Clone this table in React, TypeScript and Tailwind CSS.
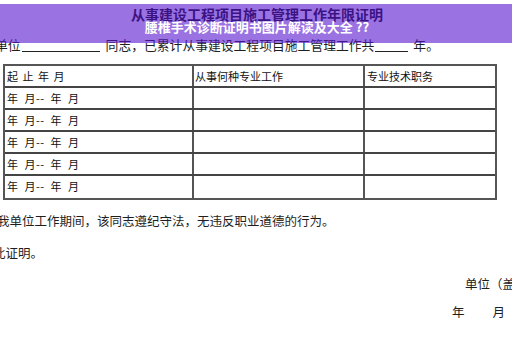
import React from "react";

const rows = ["年 月-- 年 月", "年 月-- 年 月", "年 月-- 年 月", "年 月-- 年 月", "年 月-- 年 月"];

export default function App() {
  const font = { fontFamily: '"Noto Sans CJK SC", "Noto Sans", sans-serif' };
  return (
    <div className="relative w-[512px] h-[340px] overflow-hidden bg-white text-[#1e1e1e]" style={font}>
      <div className="flex flex-col">
        <div className="h-[6px]" />
        <div className="text-center text-[14px] leading-[16px] font-bold pl-[2px] text-[#111]">从事建设工程项目施工管理工作年限证明</div>
        <div className="h-[15px]" />
        <div className="flex items-end text-[12.8px] leading-[16px] ml-[-5px] whitespace-nowrap">
          <span>单位</span>
          <span className="w-[78px] border-b border-[#222] mb-[1px] ml-[1px]" />
          <span className="ml-[6px]">同志，已累计从事建设工程项目施工管理工作共</span>
          <span className="w-[33px] border-b border-[#222] mb-[1px] ml-[1px]" />
          <span className="ml-[5px]">年。</span>
        </div>
        <div className="h-[11px]" />
        <div className="ml-[3px] w-[494px] border-2 border-[#555] text-[11px] leading-[20px] text-[#111]">
          <div className="grid grid-cols-[189px_171px_1fr] h-[22px] border-b-2 border-[#444]">
            <div className="px-[2px] border-r-2 border-[#555] [word-spacing:2px]">起 止 年 月</div>
            <div className="px-[1px] border-r-2 border-[#555]">从事何种专业工作</div>
            <div className="px-[2px]">专业技术职务</div>
          </div>
          {rows.map((r, i) => (
            <div key={i} className={`grid grid-cols-[189px_171px_1fr] h-[22px] ${i < 4 ? "border-b-2 border-[#444]" : ""}`}>
              <div className="px-[2px] border-r-2 border-[#555] [word-spacing:3px] tracking-[0.5px]">{r}</div>
              <div className="border-r-2 border-[#555]" />
              <div />
            </div>
          ))}
        </div>
        <div className="h-[13px]" />
        <div className="ml-[-3px] text-[12.5px] leading-[16px] whitespace-nowrap">我单位工作期间，该同志遵纪守法，无违反职业道德的行为。</div>
        <div className="h-[16px]" />
        <div className="ml-[-7px] text-[12.5px] leading-[16px]">此证明。</div>
        <div className="h-[15px]" />
        <div className="flex justify-end text-[12.5px] leading-[16px] mr-[-28px]">
          <span className="whitespace-nowrap">单位（盖章）</span>
        </div>
        <div className="h-[12px]" />
        <div className="flex justify-end text-[12.5px] leading-[16px] pr-[7px] gap-[28px]">
          <span>年</span>
          <span>月</span>
        </div>
      </div>
      <div className="absolute left-0 right-0 top-[4px] h-[39px] bg-[rgba(87,20,207,0.6)] flex flex-col items-center justify-end pb-[9px]">
        <div className="text-white text-[13px] leading-[14px] font-bold pl-[2px]">腰椎手术诊断证明书图片解读及大全 ??</div>
      </div>
    </div>
  );
}
